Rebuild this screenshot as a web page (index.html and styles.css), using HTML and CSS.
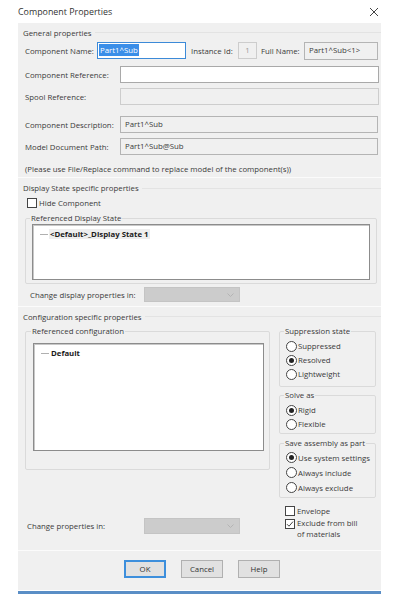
FILE: index.html
```html
<!DOCTYPE html>
<html>
<head>
<meta charset="utf-8">
<link rel="stylesheet" href="styles.css">
</head>
<body>
<div class="window">
  <div class="titlebar">
    <span class="title">Component Properties</span>
    <svg class="close" width="10" height="10" viewBox="0 0 10 10"><path d="M1 1L9 9M9 1L1 9" stroke="#444" stroke-width="1" fill="none"/></svg>
  </div>
  <div class="panel">
    <section class="sec sec-general">
      <div class="sec-head"><span>General properties</span></div>
      <div class="row row-name">
        <span class="lbl lbl-name">Component Name:</span>
        <div class="field focus box-name"><span class="sel">Part1^Sub</span></div>
        <span class="lbl lbl-inst">Instance Id:</span>
        <div class="field dis box-inst">1</div>
        <span class="lbl lbl-full">Full Name:</span>
        <div class="field ro box-full">Part1^Sub&lt;1&gt;</div>
      </div>
      <div class="row row-ref">
        <span class="lbl lbl-long">Component Reference:</span>
        <div class="field wide"></div>
      </div>
      <div class="row row-spool">
        <span class="lbl lbl-long">Spool Reference:</span>
        <div class="field dis wide"></div>
      </div>
      <div class="row row-desc">
        <span class="lbl lbl-long">Component Description:</span>
        <div class="field ro wide">Part1^Sub</div>
      </div>
      <div class="row row-path">
        <span class="lbl lbl-long">Model Document Path:</span>
        <div class="field ro wide">Part1^Sub@Sub</div>
      </div>
      <div class="note">(Please use File/Replace command to replace model of the component(s))</div>
    </section>

    <section class="sec sec-display">
      <div class="sec-head"><span>Display State specific properties</span></div>
      <label class="check row-hide"><span class="cbox"></span><span>Hide Component</span></label>
      <fieldset class="group group-display">
        <legend>Referenced Display State</legend>
        <div class="listbox list-display">
          <div class="item"><span class="tree-line"></span><span class="item-text shaded">&lt;Default&gt;_Display State 1</span></div>
        </div>
      </fieldset>
      <div class="row row-dprops">
        <span class="lbl lbl-dprops">Change display properties in:</span>
        <div class="combo"><svg width="7" height="4" viewBox="0 0 7 4"><path d="M0.5 0.5L3.5 3.5L6.5 0.5" stroke="#b4b4b4" fill="none"/></svg></div>
      </div>
    </section>

    <section class="sec sec-config">
      <div class="sec-head head-config"><span>Configuration specific properties</span></div>
      <div class="config-body">
        <div class="config-left">
          <fieldset class="group group-config">
            <legend>Referenced configuration</legend>
            <div class="listbox list-config">
              <div class="item"><span class="tree-line"></span><span class="item-text">Default</span></div>
            </div>
          </fieldset>
          <div class="row row-props">
            <span class="lbl lbl-props">Change properties in:</span>
            <div class="combo combo-props"><svg width="7" height="4" viewBox="0 0 7 4"><path d="M0.5 0.5L3.5 3.5L6.5 0.5" stroke="#b4b4b4" fill="none"/></svg></div>
          </div>
        </div>
        <div class="config-right">
          <fieldset class="group side group-supp">
            <legend>Suppression state</legend>
            <div class="radio"><span class="rbtn"></span><span>Suppressed</span></div>
            <div class="radio"><span class="rbtn on"></span><span>Resolved</span></div>
            <div class="radio"><span class="rbtn"></span><span>Lightweight</span></div>
          </fieldset>
          <fieldset class="group side group-solve">
            <legend>Solve as</legend>
            <div class="radio"><span class="rbtn on"></span><span>Rigid</span></div>
            <div class="radio"><span class="rbtn"></span><span>Flexible</span></div>
          </fieldset>
          <fieldset class="group side group-save">
            <legend>Save assembly as part</legend>
            <div class="radio"><span class="rbtn on"></span><span>Use system settings</span></div>
            <div class="radio"><span class="rbtn"></span><span>Always include</span></div>
            <div class="radio"><span class="rbtn"></span><span>Always exclude</span></div>
          </fieldset>
          <div class="check side-check"><span class="cbox"></span><span>Envelope</span></div>
          <div class="check side-check check-bom"><span class="cbox checked"><svg width="8" height="8" viewBox="0 0 8 8"><path d="M1 4.2L3 6.2L7 1.6" stroke="#444" stroke-width="1" fill="none"/></svg></span><span>Exclude from bill<br>of materials</span></div>
        </div>
      </div>
    </section>

    <div class="footer">
      <button class="btn default">OK</button>
      <button class="btn">Cancel</button>
      <button class="btn">Help</button>
    </div>
  </div>
  <div class="taskline"></div>
</div>
</body>
</html>
```

FILE: styles.css
```css
* { box-sizing: border-box; }
html, body { margin: 0; background: #fff; }
body {
  font-family: "Open Sans", "Noto Sans", sans-serif;
  font-size: 7.8px;
  color: #3a3a3a;
}
.window { width: 400px; height: 600px; }

.titlebar {
  height: 23px;
  display: flex;
  align-items: center;
  justify-content: space-between;
  padding: 0 21px 0 18px;
}
.title { font-size: 8.9px; color: #333; }
.close { display: block; }

.panel {
  margin: 0 19px 0 18px;
  height: 567px;
  background: #f0f0f0;
  display: flex;
  flex-direction: column;
}
.taskline {
  margin: 1px 19px 0 18px;
  height: 3px;
  background: #5a8ec6;
}

.sec {
  padding: 0 0 0 7px;
  border-bottom: 1px solid #fbfbfb;
}
.sec-general { height: 155px; }
.sec-display { height: 129px; }
.sec-config { height: 244px; }

.sec-head {
  display: flex;
  align-items: center;
  height: 19px;
  margin-left: -2px;
  white-space: nowrap;
}
.sec-head::after {
  content: "";
  flex: 1;
  border-top: 1px solid #e3e3e3;
  margin-left: 3px;
}
.sec-display .sec-head { height: 20px; }

.row { display: flex; align-items: center; height: 17px; white-space: nowrap; }
.lbl { flex: none; }
.lbl-name { width: 72px; }
.lbl-inst { width: 47px; margin-left: 5px; }
.lbl-full { width: 43px; margin-left: 4px; }
.lbl-long { width: 95px; }

.row-ref { margin-top: 7px; }
.row-spool { margin-top: 5px; }
.row-desc { margin-top: 11px; }
.row-path { margin-top: 5px; }

.field {
  flex: none;
  height: 17px;
  border: 1px solid #a9a9a9;
  background: #fff;
  padding: 0 4px;
  line-height: 14px;
  overflow: hidden;
  white-space: nowrap;
}
.field.dis { background: #f0f0f0; border-color: #cdcdcd; color: #9a9a9a; }
.field.ro { background: #f0f0f0; border-color: #b4b4b4; }
.field.focus { border-color: #3c8ad8; padding: 0 1px; }
.sel { background: #3a8ee8; color: #fff; padding: 0 1px; display: inline-block; line-height: 12px; margin-top: 1px; }
.box-name { width: 89px; }
.box-inst { width: 19px; text-align: center; }
.box-full { width: 74px; height: 18px; }
.wide { width: 258px; }
.row-ref .wide, .row-spool .wide { width: 259px; }

.note { margin-top: 8px; height: 12px; line-height: 12px; white-space: nowrap; }

.check { display: flex; align-items: center; white-space: nowrap; }
.cbox {
  flex: none;
  width: 10px;
  height: 10px;
  border: 1px solid #444;
  background: #fff;
  margin-right: 2px;
  display: flex;
  align-items: center;
  justify-content: center;
}
.row-hide { height: 10px; margin-left: 2px; }

.group {
  margin: 0;
  border: 1px solid #dadada;
  border-radius: 2px;
  padding: 0 6px;
  min-width: 0;
}
.group legend {
  padding: 0 1px;
  line-height: 10px;
  height: 10px;
  margin-left: -2px;
}
.group-display {
  margin-top: 5px;
  width: 352px;
  padding-top: 1px;
  padding-bottom: 3px;
}
.listbox {
  background: #fff;
  border: 1px solid #8c8c8c;
  box-shadow: inset 1px 1px 0 #c8c8c8;
}
.list-display { height: 56px; }
.item { display: flex; align-items: center; height: 12px; margin-top: 3px; padding-left: 7px; }
.tree-line { width: 8px; border-top: 1px solid #b0b0b0; margin-right: 1px; }
.item-text { font-weight: bold; color: #1a1a1a; padding: 0 1px; }
.item-text.shaded { background: #eeeeee; }

.row-dprops { margin-top: 3px; height: 15px; }
.lbl-dprops { width: 114px; margin-left: 5px; }
.combo {
  width: 96px;
  height: 15px;
  background: #cccccc;
  border: 1px solid #c4c4c4;
  display: flex;
  align-items: center;
  justify-content: flex-end;
  padding-right: 5px;
}

.config-body { display: flex; gap: 9px; }
.config-left { width: 245px; display: flex; flex-direction: column; }
.group-config { padding: 7px 5px 18px 7px; }
.list-config { height: 108px; }
.row-props { margin-top: 48px; height: 16px; }
.lbl-props { width: 117px; margin-left: 2px; }
.combo-props { height: 16px; }

.config-right { width: 97px; display: flex; flex-direction: column; }
.side { padding: 3px 4px 5px 6px; }
.group-solve { margin-top: 3px; padding-bottom: 2px; }
.group-save { margin-top: 4px; padding-top: 2px; padding-bottom: 2px; }
.radio { display: flex; align-items: center; height: 14px; white-space: nowrap; }
.group-save .radio { height: 15px; }
.rbtn {
  flex: none;
  width: 11px;
  height: 11px;
  border: 1px solid #444;
  border-radius: 50%;
  background: #fff;
  margin-right: 1px;
  display: flex;
  align-items: center;
  justify-content: center;
}
.rbtn.on::after {
  content: "";
  width: 5px;
  height: 5px;
  border-radius: 50%;
  background: #222;
}
.side-check { margin-left: 6px; height: 12px; margin-top: 7px; }
.check-bom { align-items: flex-start; margin-top: 1px; height: auto; line-height: 11px; }
.check-bom .cbox { margin-top: 1px; }

.footer {
  flex: 1;
  display: flex;
  align-items: flex-start;
  padding: 9px 0 0 106px;
  gap: 15px;
}
.btn {
  font-family: inherit;
  font-size: 7.8px;
  color: #333;
  width: 42px;
  height: 18px;
  padding: 0;
  background: #e1e1e1;
  border: 1px solid #b0b0b0;
  border-radius: 0;
}
.btn.default { border: 2px solid #3d8fdc; }
```
